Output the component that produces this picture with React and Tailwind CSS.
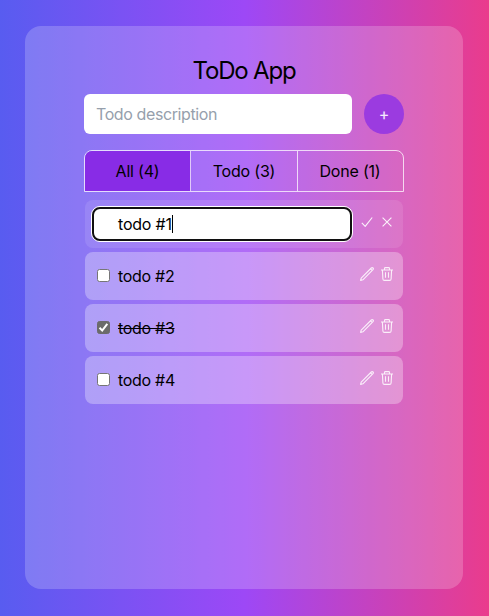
const todos = [
  { id: 2, text: "todo #2", done: false },
  { id: 3, text: "todo #3", done: true },
  { id: 4, text: "todo #4", done: false },
];

function Icon({ children }) {
  return (
    <svg viewBox="0 0 14 14" className="size-[14px]" fill="none" stroke="currentColor" strokeWidth="1.1" strokeLinejoin="round">
      {children}
    </svg>
  );
}

function Checkbox({ checked }) {
  return (
    <span
      className={
        "mb-px flex size-[13px] shrink-0 items-center justify-center rounded-[2.5px] border " +
        (checked ? "border-[#6b6b6b] bg-[#6b6b6b]" : "border-[#767676] bg-white")
      }
    >
      {checked && (
        <svg viewBox="0 0 11 11" className="size-[11px]" fill="none" stroke="white" strokeWidth="2">
          <path d="M1.5 5.8 4.2 8.5 9.3 1.8" />
        </svg>
      )}
    </span>
  );
}

function TodoRow({ todo }) {
  return (
    <li className="flex h-12 items-center rounded-lg bg-white/30 pr-[9px] pl-3">
      <Checkbox checked={todo.done} />
      <span className={"ml-2 flex-1 tracking-[-0.3px] " + (todo.done ? "line-through" : "")}>{todo.text}</span>
      <div className="mb-1 flex gap-[6px] text-white/85">
        <Icon>
          <path d="M.6 13.4 1.2 11.1 11.3 1Q12.2.3 13 1T13 2.7L2.9 12.8ZM10.6 1.9 12.1 3.4" />
        </Icon>
        <Icon>
          <path d="M1 3h12M4.5 3V1.5Q4.5.6 5.4.6h3.2Q9.5.6 9.5 1.5V3M2.4 3l.5 9q.1 1.4 1.5 1.4h5.2q1.4 0 1.5-1.4l.5-9M5.5 5.3v5.4M8.5 5.3v5.4" />
        </Icon>
      </div>
    </li>
  );
}

export default function App() {
  return (
    <div className="h-[616px] w-[489px] bg-linear-to-r/srgb from-[#585cf0] via-[#9d48f6] to-[#ea3c8c] pt-[26px] pl-[25px] font-['Inter',sans-serif] text-base text-black">
      <main className="flex h-[563px] w-[438px] flex-col rounded-2xl bg-white/20 px-[59px] pt-[29px]">
        <h1 className="text-center text-2xl leading-8 tracking-[-1.2px]">ToDo App</h1>
        <form className="mt-[7px] flex gap-3">
          <div className="flex h-10 w-[268px] items-center rounded-md bg-white px-3 tracking-[-0.4px] text-[#969fac]">
            Todo description
          </div>
          <button type="button" className="size-10 rounded-full bg-[#9b3be0] text-white/90">
            +
          </button>
        </form>
        <nav className="mt-4 flex h-[42px] divide-x divide-white/75 overflow-hidden rounded-t-lg border border-white/75">
          <button className="w-[106px] bg-[#882ce6] tracking-[-0.2px]">All (4)</button>
          <button className="w-[107px] tracking-[-0.2px]">Todo (3)</button>
          <button className="flex-1 pr-px tracking-[-0.2px]">Done (1)</button>
        </nav>
        <ul className="mx-px mt-2 flex flex-col gap-1">
          <li className="flex h-12 items-center rounded-lg bg-white/10 pr-[9px] pl-[6px]">
            <div className="flex h-9 w-[262px] items-center rounded-[9px] border border-white bg-white">
              <div className="flex h-[34px] w-[260px] shrink-0 items-center rounded-lg border-2 border-[#101010] pl-6">
                <span className="tracking-[-0.2px]">todo #1</span>
                <span className="h-[18px] w-px bg-black" />
              </div>
            </div>
            <div className="mb-1 ml-auto flex gap-[6px] text-white/90">
              <Icon>
                <path d="M1.8 7.8 5.2 11.3 12.2 2.5" />
              </Icon>
              <Icon>
                <path d="M2.6 2.6 11.4 11.4M11.4 2.6 2.6 11.4" />
              </Icon>
            </div>
          </li>
          {todos.map((todo) => (
            <TodoRow key={todo.id} todo={todo} />
          ))}
        </ul>
      </main>
    </div>
  );
}
